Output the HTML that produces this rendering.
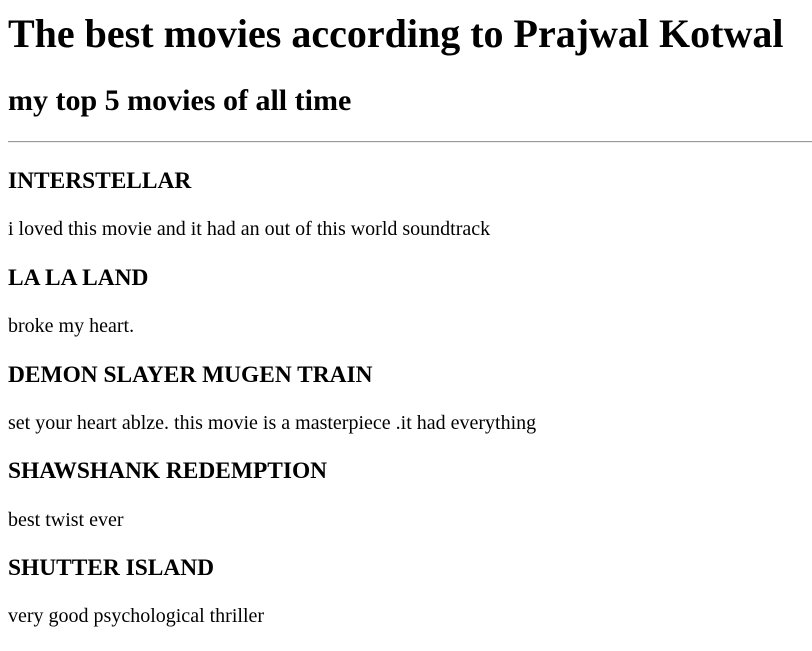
<!DOCTYPE html>
<html><head><meta charset="utf-8"><style>
html,body{margin:0;padding:0;background:#fff;width:812px;height:651px;overflow:hidden;}
body{position:relative;font-family:"Liberation Serif","Times New Roman",serif;color:#000;}
.t{position:absolute;left:8px;margin:0;line-height:1;white-space:nowrap;}
.h1{font-size:40px;font-weight:bold;}
.h2{font-size:30px;font-weight:bold;}
.h3{font-size:23.4px;font-weight:bold;}
.p{font-size:20px;}
.hr{position:absolute;left:8px;right:0;top:141px;height:0;border-top:1px solid #9a9a9a;border-bottom:1px solid #eee;}
</style></head><body>
<div class="t h1" style="top:14px">The best movies according to Prajwal Kotwal</div>
<div class="t h2" style="top:86px">my top 5 movies of all time</div>
<div class="hr"></div>
<div class="t h3" style="top:170px">INTERSTELLAR</div>
<div class="t p" style="top:219px">i loved this movie and it had an out of this world soundtrack</div>
<div class="t h3" style="top:267px">LA LA LAND</div>
<div class="t p" style="top:316px">broke my heart.</div>
<div class="t h3" style="top:364px">DEMON SLAYER MUGEN TRAIN</div>
<div class="t p" style="top:413px">set your heart ablze. this movie is a masterpiece .it had everything</div>
<div class="t h3" style="top:460px">SHAWSHANK REDEMPTION</div>
<div class="t p" style="top:510px">best twist ever</div>
<div class="t h3" style="top:557px">SHUTTER ISLAND</div>
<div class="t p" style="top:606px">very good psychological thriller</div>
</body></html>
